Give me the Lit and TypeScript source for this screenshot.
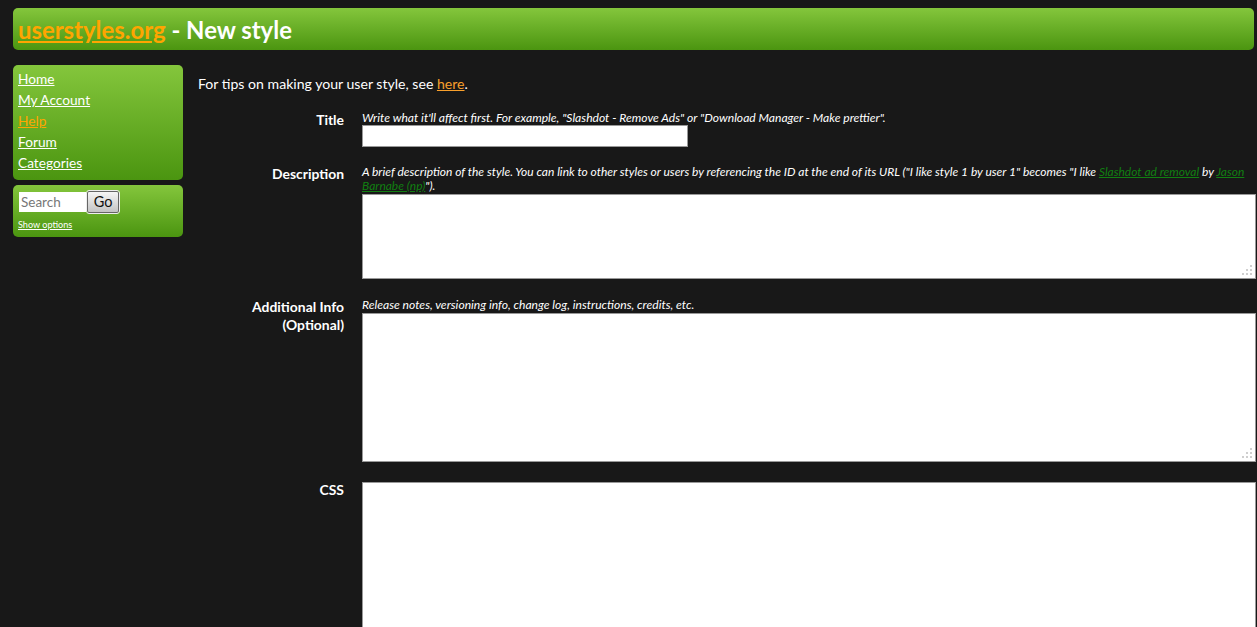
import { LitElement, html, css } from "lit";
import { customElement } from "lit/decorators.js";

const grip = html`<svg class="grip" width="10" height="10" viewBox="0 0 10 10" aria-hidden="true"><g fill="#cfcfcf"><rect x="8" y="0" width="2" height="2"/><rect x="4" y="4" width="2" height="2"/><rect x="8" y="4" width="2" height="2"/><rect x="0" y="8" width="2" height="2"/><rect x="4" y="8" width="2" height="2"/><rect x="8" y="8" width="2" height="2"/></g></svg>`;

@customElement("app-root")
export class AppRoot extends LitElement {
  static styles = css`
    :host { display: block; height: 627px; overflow: hidden; background: #181818; color: #fff; font-family: Lato, "Open Sans", sans-serif; font-size: 14px; line-height: 18px; }
    a { color: #fff; text-decoration: underline; }
    a.hot { color: #ffa500; }
    .page { padding: 8px 1px 0 13px; }
    .panel { background: linear-gradient(#84c63c, #4b9510); border-radius: 5px; }
    header { height: 42px; display: flex; align-items: center; padding: 1px 5px 0; box-sizing: border-box; margin-right: 2px; }
    h1 { margin: 0; font-size: 23.9px; line-height: 41px; font-weight: 700; }
    .main { display: flex; margin-top: 15px; }
    aside { width: 170px; flex: none; display: flex; flex-direction: column; gap: 5px; }
    nav { height: 115px; box-sizing: border-box; padding: 3px 5px; display: flex; flex-direction: column; line-height: 21px; font-size: 13.7px; }
    nav a { align-self: flex-start; }
    .search { height: 52px; box-sizing: border-box; padding: 6px 5px 0 5px; }
    .search-row { display: flex; align-items: center; padding-left: 1px; }
    .search input { width: 67px; height: 20px; box-sizing: border-box; border: 0; margin: 0; padding: 0 2px; font: inherit; font-size: 13.5px; background: #fff; }
    .search input::placeholder { color: #777; opacity: 1; }
    .go { width: 32px; height: 22px; box-sizing: border-box; margin: 0 0 0 1px; padding: 0; font: inherit; font-size: 14.5px; color: #111; border: 1px solid #666; border-radius: 2px; outline: 1px solid #eee; background: linear-gradient(#f6f6f6, #c4c4c4); }
    .opts { display: block; margin-top: 6px; font-size: 9.1px; line-height: 12px; }
    .content { flex: 1; min-width: 0; padding-left: 15px; }
    .tip { margin: 10px 0 0; line-height: 18px; font-size: 14.1px; }
    .tip a.hot { color: #f9a02c; }
    form { display: grid; grid-template-columns: 146px 1fr; column-gap: 18px; margin-top: 18px; }
    .label { font-weight: 700; text-align: right; font-size: 13.9px; line-height: 18px; }
    .field { min-width: 0; }
    .hint { font-style: italic; font-size: 12.1px; line-height: 14px; display: block; }
    .hint.tight { font-size: 12px; }
    .hint a { color: #117f11; }
    .title-input { display: block; width: 326px; height: 22px; box-sizing: border-box; border: 1px solid #999; margin: 0 0 18px; background: #fff; padding: 0; }
    .area { position: relative; display: block; margin-top: 1px; }
    textarea { display: block; width: 100%; box-sizing: border-box; border: 1px solid #999; margin: 0; padding: 0; background: #fff; resize: none; outline: 0; }
    .grip { position: absolute; right: 4px; bottom: 4px; }
    .row-desc { height: 133px; }
    .row-info { height: 183px; }
    .d { height: 85px; }
    .i { height: 149px; }
    .c { height: 300px; margin-top: 1px; }
  `;

  render() {
    return html`<div class="page">
      <header class="panel"><h1><a class="hot" href="#">userstyles.org</a> - New style</h1></header>
      <div class="main">
        <aside>
          <nav class="panel">
            <a href="#">Home</a><a href="#">My Account</a><a class="hot" href="#">Help</a><a href="#">Forum</a><a href="#">Categories</a>
          </nav>
          <div class="panel search">
            <div class="search-row"><input placeholder="Search" /><button class="go">Go</button></div>
            <a class="opts" href="#">Show options</a>
          </div>
        </aside>
        <div class="content">
          <p class="tip">For tips on making your user style, see <a class="hot" href="#">here</a>.</p>
          <form>
            <div class="label">Title</div>
            <div class="field">
              <span class="hint">Write what it'll affect first. For example, "Slashdot - Remove Ads" or "Download Manager - Make prettier".</span>
              <input class="title-input" />
            </div>
            <div class="label">Description</div>
            <div class="field row-desc">
              <span class="hint tight">A brief description of the style. You can link to other styles or users by referencing the ID at the end of its URL ("I like style 1 by user 1" becomes "I like <a href="#">Slashdot ad removal</a> by <a href="#">Jason Barnabe (np)</a>").</span>
              <div class="area"><textarea class="d"></textarea>${grip}</div>
            </div>
            <div class="label">Additional Info<br />(Optional)</div>
            <div class="field row-info">
              <span class="hint">Release notes, versioning info, change log, instructions, credits, etc.</span>
              <div class="area"><textarea class="i"></textarea>${grip}</div>
            </div>
            <div class="label">CSS</div>
            <div class="field"><textarea class="c"></textarea></div>
          </form>
        </div>
      </div>
    </div>`;
  }
}
